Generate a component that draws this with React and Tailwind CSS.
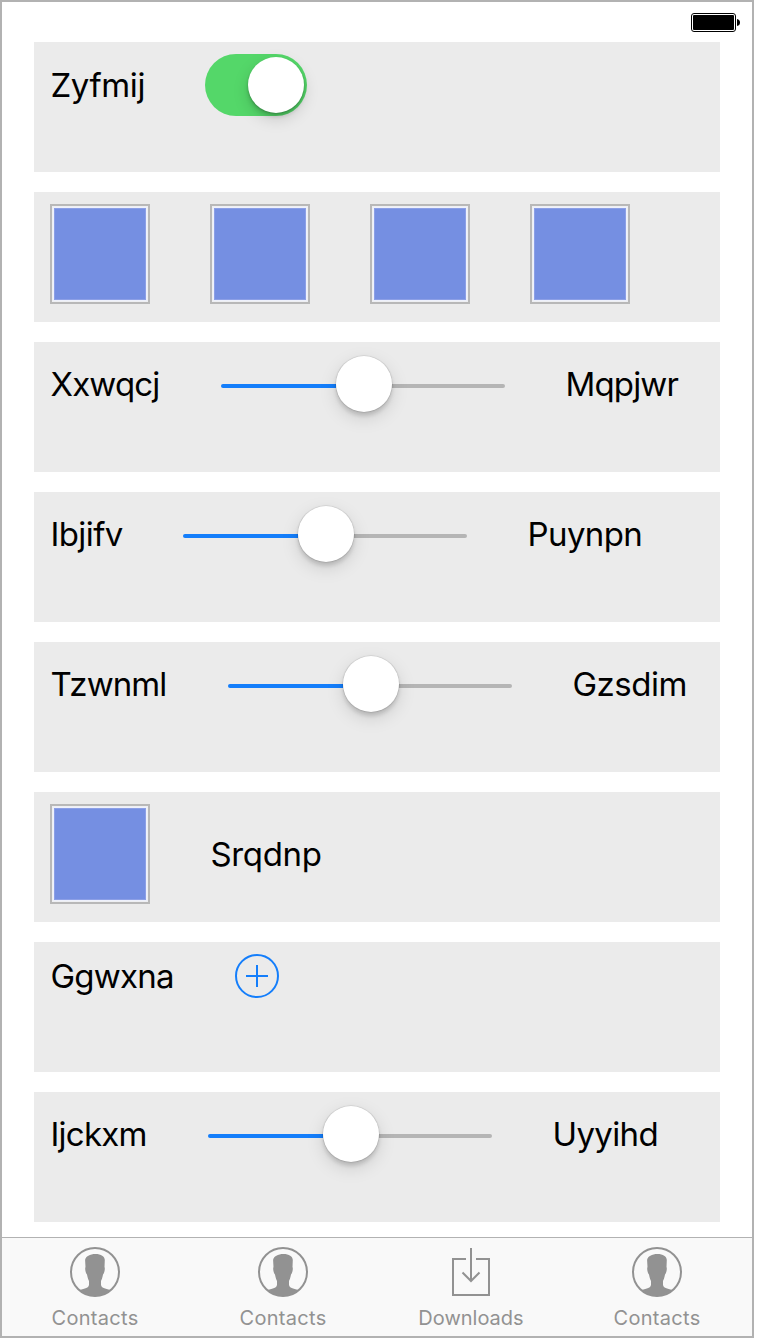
function Card({ children }) {
  return (
    <section className="h-[130px] w-[686px] bg-[#ebebeb] pl-4 pt-3">
      <div className="flex items-center gap-[60px]">{children}</div>
    </section>
  );
}

function Label({ children, className }) {
  return (
    <span className={`shrink-0 whitespace-nowrap pl-[0.5px] text-[33px] leading-[40px] text-black ${className}`}>
      {children}
    </span>
  );
}

function Toggle() {
  return (
    <div className="flex h-[62px] w-[102px] items-center justify-end rounded-full bg-[#54d769] pr-[3px]">
      <div className="size-14 rounded-full bg-white shadow-[0_6px_16px_rgba(0,0,0,0.15),0_1px_2px_rgba(0,0,0,0.2),0_4px_4px_rgba(0,0,0,0.12)]" />
    </div>
  );
}

function Slider() {
  return (
    <div className="flex h-[60px] w-[284px] items-center">
      <div className="mt-1 h-1 w-[115px] rounded-l-full bg-[#147efb]" />
      <div className="z-10 size-14 rounded-full bg-white shadow-[0_0_1px_0.5px_rgba(0,0,0,0.15),0_6px_18px_rgba(0,0,0,0.13),0_4px_4px_rgba(0,0,0,0.14)]" />
      <div className="mt-1 h-1 w-[113px] rounded-r-full bg-[#b5b5b5]" />
    </div>
  );
}

function Swatch() {
  return (
    <div className="size-[100px] border-2 border-[#b8b8b8] bg-[#eeeff2] p-px">
      <div className="size-full border border-[#eef1fc] bg-[#758fe2] shadow-[inset_0_0_0_1px_#8c9fe6]" />
    </div>
  );
}

function SliderCard({ left, right, leftClass, rightClass }) {
  return (
    <Card>
      <Label className={leftClass}>{left}</Label>
      <Slider />
      <Label className={rightClass}>{right}</Label>
    </Card>
  );
}

function Battery() {
  return (
    <svg width="50" height="20" viewBox="0 0 50 20" className="block">
      <rect x="0.5" y="0.5" width="44" height="18" rx="2.5" fill="white" stroke="black" />
      <rect x="2" y="2" width="41" height="15" rx="1" fill="black" />
      <path d="M46 6 Q49 6.5 49 9.5 Q49 12.500 46 13Z" fill="black" />
    </svg>
  );
}

function ContactIcon() {
  return (
    <svg width="50" height="50" viewBox="0 0 50 50" fill="none" className="block">
      <circle cx="25" cy="25" r="24" stroke="#929292" strokeWidth="2" />
      <path
        d="M25.500 7C31 7 34.700 9.500 34.800 13L34.500 20C35.300 21.500 34.500 26 33 27.500C32.500 30.500 31.800 32.500 31 34V37.500C31.200 41 35 41.500 40.500 43A24.500 24.500 0 0 1 9.500 43C15 41.500 18.800 41 19 37.500V34C18.200 32.500 17.500 30.500 17 27.500C15.500 26 14.700 21.500 15.500 20L15.100 13C15.500 9.500 20 7 25.500 7Z"
        fill="#929292"
      />
    </svg>
  );
}

function DownloadIcon() {
  return (
    <svg width="50" height="50" viewBox="0 0 50 50" fill="none" stroke="#929292" strokeWidth="2" className="block">
      <path d="M20 12H7V48H43V12H30" />
      <path d="M25 1V34M16.500 25.500L25 34L33.500 25.500" />
    </svg>
  );
}

function Tab({ icon, label, className }) {
  return (
    <div className={`flex flex-col items-center pt-[9px] ${className}`}>
      {icon}
      <span className="mt-[9px] text-[20px] leading-6 text-[#929292]">{label}</span>
    </div>
  );
}

export default function App() {
  return (
    <div className="h-[1340px] w-[760px] bg-white font-['Inter','Liberation_Sans',sans-serif]">
      <div className="flex h-[1338px] w-[754px] flex-col border-2 border-[#b2b2b2] bg-white">
        <header className="flex h-10 shrink-0 justify-end pr-[11px] pt-[11px]">
          <Battery />
        </header>
        <main className="flex flex-1 flex-col gap-5 pl-8">
          <Card>
            <Label className="w-[95px] tracking-[-0.4px]">Zyfmij</Label>
            <Toggle />
          </Card>
          <Card>
            <Swatch />
            <Swatch />
            <Swatch />
            <Swatch />
          </Card>
          <SliderCard
            left="Xxwqcj"
            right="Mqpjwr"
            leftClass="w-[111px] tracking-[-0.85px]"
            rightClass="w-[114px] tracking-[-0.85px]"
          />
          <SliderCard
            left="Ibjifv"
            right="Puynpn"
            leftClass="w-[73px] tracking-[-0.6px]"
            rightClass="w-[114px] tracking-[-0.6px]"
          />
          <SliderCard
            left="Tzwnml"
            right="Gzsdim"
            leftClass="w-[118px] tracking-[-0.95px]"
            rightClass="w-[114px] tracking-[-0.5px]"
          />
          <Card>
            <Swatch />
            <Label className="tracking-[-0.35px]">Srqdnp</Label>
          </Card>
          <Card>
            <Label className="w-[125px] tracking-[-0.8px]">Ggwxna</Label>
            <svg width="44" height="44" viewBox="0 0 44 44" fill="none" stroke="#147efb" strokeWidth="2" className="block">
              <circle cx="22" cy="22" r="21" />
              <path d="M11 22H33M22 11V33" />
            </svg>
          </Card>
          <SliderCard
            left="Ijckxm"
            right="Uyyihd"
            leftClass="w-[98px] tracking-[-0.75px]"
            rightClass="w-[114px] tracking-[-0.65px]"
          />
        </main>
        <nav className="flex h-[99px] shrink-0 border-t border-[#b2b2b2] bg-[#f9f9f9]">
          <Tab icon={<ContactIcon />} label="Contacts" className="w-[186px] tracking-[0.3px]" />
          <Tab icon={<ContactIcon />} label="Contacts" className="w-[190px] tracking-[0.3px]" />
          <Tab icon={<DownloadIcon />} label="Downloads" className="w-[186px]" />
          <Tab icon={<ContactIcon />} label="Contacts" className="w-[186px] tracking-[0.3px]" />
        </nav>
      </div>
    </div>
  );
}
